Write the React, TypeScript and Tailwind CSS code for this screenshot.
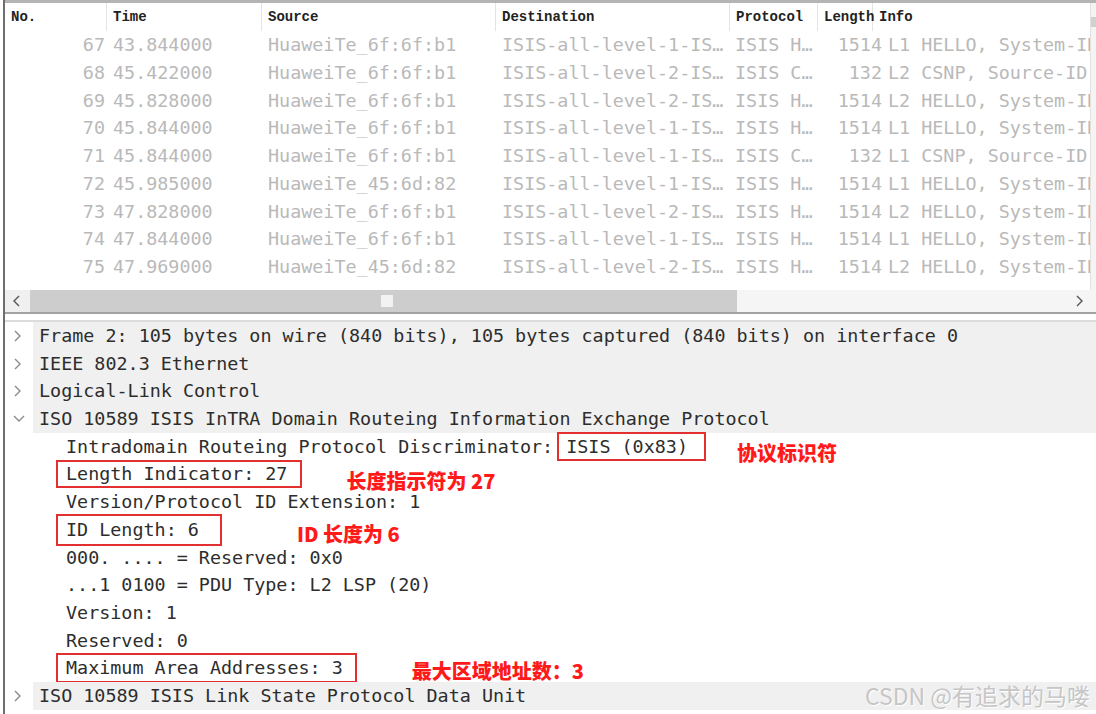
import React from 'react';

type Packet = {
  no: number;
  time: string;
  src: string;
  dst: string;
  proto: string;
  len: number;
  info: string;
};

const packets: Packet[] = [
  { no: 67, time: '43.844000', src: 'HuaweiTe_6f:6f:b1', dst: 'ISIS-all-level-1-IS…', proto: 'ISIS H…', len: 1514, info: 'L1 HELLO, System-ID: 0000.0000.0001' },
  { no: 68, time: '45.422000', src: 'HuaweiTe_6f:6f:b1', dst: 'ISIS-all-level-2-IS…', proto: 'ISIS C…', len: 132, info: 'L2 CSNP, Source-ID: 0000.0000.0001' },
  { no: 69, time: '45.828000', src: 'HuaweiTe_6f:6f:b1', dst: 'ISIS-all-level-2-IS…', proto: 'ISIS H…', len: 1514, info: 'L2 HELLO, System-ID: 0000.0000.0001' },
  { no: 70, time: '45.844000', src: 'HuaweiTe_6f:6f:b1', dst: 'ISIS-all-level-1-IS…', proto: 'ISIS H…', len: 1514, info: 'L1 HELLO, System-ID: 0000.0000.0001' },
  { no: 71, time: '45.844000', src: 'HuaweiTe_6f:6f:b1', dst: 'ISIS-all-level-1-IS…', proto: 'ISIS C…', len: 132, info: 'L1 CSNP, Source-ID: 0000.0000.0001' },
  { no: 72, time: '45.985000', src: 'HuaweiTe_45:6d:82', dst: 'ISIS-all-level-1-IS…', proto: 'ISIS H…', len: 1514, info: 'L1 HELLO, System-ID: 0000.0000.0002' },
  { no: 73, time: '47.828000', src: 'HuaweiTe_6f:6f:b1', dst: 'ISIS-all-level-2-IS…', proto: 'ISIS H…', len: 1514, info: 'L2 HELLO, System-ID: 0000.0000.0001' },
  { no: 74, time: '47.844000', src: 'HuaweiTe_6f:6f:b1', dst: 'ISIS-all-level-1-IS…', proto: 'ISIS H…', len: 1514, info: 'L1 HELLO, System-ID: 0000.0000.0001' },
  { no: 75, time: '47.969000', src: 'HuaweiTe_45:6d:82', dst: 'ISIS-all-level-2-IS…', proto: 'ISIS H…', len: 1514, info: 'L2 HELLO, System-ID: 0000.0000.0002' },
];

const Chevron: React.FC<{ dir: 'right' | 'down' | 'left'; className?: string }> = ({ dir, className }) => {
  const d = dir === 'right' ? 'M2 1 L7 6 L2 11' : dir === 'left' ? 'M7 1 L2 6 L7 11' : 'M1 3 L6 8 L11 3';
  return (
    <svg width="12" height="12" viewBox="0 0 12 12" className={className}>
      <path d={d} fill="none" stroke="currentColor" strokeWidth="1.4" />
    </svg>
  );
};

const headerCell = "flex items-center pl-[6px] border-r border-[#e4e4e4] h-full";

const PacketList: React.FC = () => (
  <div className="flex h-[287px]">
    <div className="flex-1 flex flex-col overflow-hidden">
      <div className="grid grid-cols-[102px_155px_234px_234px_88px_55px_1fr] h-[28px] font-['Liberation_Mono',monospace] font-bold text-[14px] text-[#222]">
        <div className={headerCell + ' pl-[5px]'}>No.</div>
        <div className={headerCell}>Time</div>
        <div className={headerCell}>Source</div>
        <div className={headerCell}>Destination</div>
        <div className={headerCell + ' pl-[5px]'}>Protocol</div>
        <div className={headerCell}>Length</div>
        <div className="flex items-center pl-[6px]">Info</div>
      </div>
      {/* data columns sit a little off the header separators, as in the capture */}
      {packets.map((p) => (
        <div
          key={p.no}
          className="grid grid-cols-[102px_155px_234px_234px_88px_66px_1fr] h-[27.75px] items-center whitespace-nowrap font-['DejaVu_Sans_Mono',monospace] text-[18.4px] text-[#b9b9b9]"
        >
          <div className="text-right pr-[2px]">{p.no}</div>
          <div className="pl-[6px]">{p.time}</div>
          <div className="pl-[6px]">{p.src}</div>
          <div className="pl-[6px]">{p.dst}</div>
          <div className="pl-[5px]">{p.proto}</div>
          <div className="text-right pr-[2px]">{p.len}</div>
          <div className="pl-[4px] overflow-hidden">{p.info}</div>
        </div>
      ))}
    </div>
    <div className="w-[6px] bg-[#f4f4f4] border-l border-[#e2e2e2] flex flex-col">
      <div className="h-[10px] mt-[14px] bg-[#d0d0d0]" />
    </div>
  </div>
);

const HScroll: React.FC = () => (
  <div className="flex h-[22px]">
    <div className="w-[25px] bg-[#f0f0f0] flex items-center justify-center text-[#555]">
      <Chevron dir="left" />
    </div>
    <div className="w-[707px] bg-[#cdcdcd] flex items-center justify-center">
      <div className="w-[12px] h-[12px] bg-[#f2f2f2] ml-[6px]" />
    </div>
    <div className="flex-1 bg-[#f5f5f5]" />
    <div className="w-[30px] bg-[#f5f5f5] flex items-center justify-center text-[#555]">
      <Chevron dir="right" />
    </div>
  </div>
);

const box = "inline-flex items-center border-2 border-[#e23030]";
const note = "font-['Noto_Sans_CJK_SC',sans-serif] font-black text-[20px] text-[#ff1a1a] leading-none";

const TopRow: React.FC<{ open?: boolean; children: React.ReactNode }> = ({ open, children }) => (
  <div className="flex h-[27.7px] items-center">
    <div className="w-[28px] flex justify-center text-[#8a8a8a]">
      <Chevron dir={open ? 'down' : 'right'} />
    </div>
    <div className="flex-1 h-full flex items-center bg-[#f0f0f0] pl-[6px]">{children}</div>
  </div>
);

const ChildRow: React.FC<{ children: React.ReactNode }> = ({ children }) => (
  <div className="flex h-[27.7px] items-center pl-[61px] whitespace-nowrap">{children}</div>
);

const Details: React.FC = () => (
  <div className="flex flex-col font-['DejaVu_Sans_Mono',monospace] text-[18.4px] text-[#2d2d2d] whitespace-nowrap">
    <TopRow>Frame 2: 105 bytes on wire (840 bits), 105 bytes captured (840 bits) on interface 0</TopRow>
    <TopRow>IEEE 802.3 Ethernet</TopRow>
    <TopRow>Logical-Link Control</TopRow>
    <TopRow open>ISO 10589 ISIS InTRA Domain Routeing Information Exchange Protocol</TopRow>
    <ChildRow>
      <span>Intradomain Routeing Protocol Discriminator:</span>
      <span className={box + ' h-[29px] ml-[4px] pl-[7px] pr-[16px]'}>ISIS (0x83)</span>
      <span className={note + ' ml-[31px] translate-y-[6px]'}>协议标识符</span>
    </ChildRow>
    <ChildRow>
      <span className={box + ' h-[28px] -ml-[10px] pl-[8px] pr-[13px]'}>Length Indicator: 27</span>
      <span className={note + ' ml-[44px] translate-y-[7px]'}>长度指示符为 27</span>
    </ChildRow>
    <ChildRow>Version/Protocol ID Extension: 1</ChildRow>
    <ChildRow>
      <span className={box + ' h-[32px] -ml-[10px] pl-[8px] pr-[21px]'}>ID Length: 6</span>
      <span className={note + ' ml-[75px] translate-y-[4px]'}>ID 长度为 6</span>
    </ChildRow>
    <ChildRow>000. .... = Reserved: 0x0</ChildRow>
    <ChildRow>...1 0100 = PDU Type: L2 LSP (20)</ChildRow>
    <ChildRow>Version: 1</ChildRow>
    <ChildRow>Reserved: 0</ChildRow>
    <ChildRow>
      <span className={box + ' h-[30px] -ml-[10px] pl-[8px] pr-[12px]'}>Maximum Area Addresses: 3</span>
      <span className={note + ' ml-[55px] translate-y-[3px]'}>最大区域地址数：3</span>
    </ChildRow>
    <TopRow>ISO 10589 ISIS Link State Protocol Data Unit</TopRow>
  </div>
);

export default function App() {
  return (
    <div className="relative w-[1096px] h-[714px] bg-white flex overflow-hidden">
      <div className="w-[3px] bg-white" />
      <div className="w-[2px] bg-[#6e6e6e]" />
      <div className="flex-1 flex flex-col min-w-0">
        <div className="h-[3px] bg-[#b4b4b4]" />
        <PacketList />
        <HScroll />
        <div className="h-[2px] bg-[#a2a2a2]" />
        <div className="h-[6px] bg-white" />
        <div className="h-[2px] bg-[#dcdcdc]" />
        <Details />
      </div>
      <div className="absolute right-[6px] bottom-[7px] font-['Noto_Sans_CJK_SC',sans-serif] text-[23px] leading-none text-[#c6c6c6] [text-shadow:1px_1px_0_#ffffff]">
        CSDN @有追求的马喽
      </div>
    </div>
  );
}
